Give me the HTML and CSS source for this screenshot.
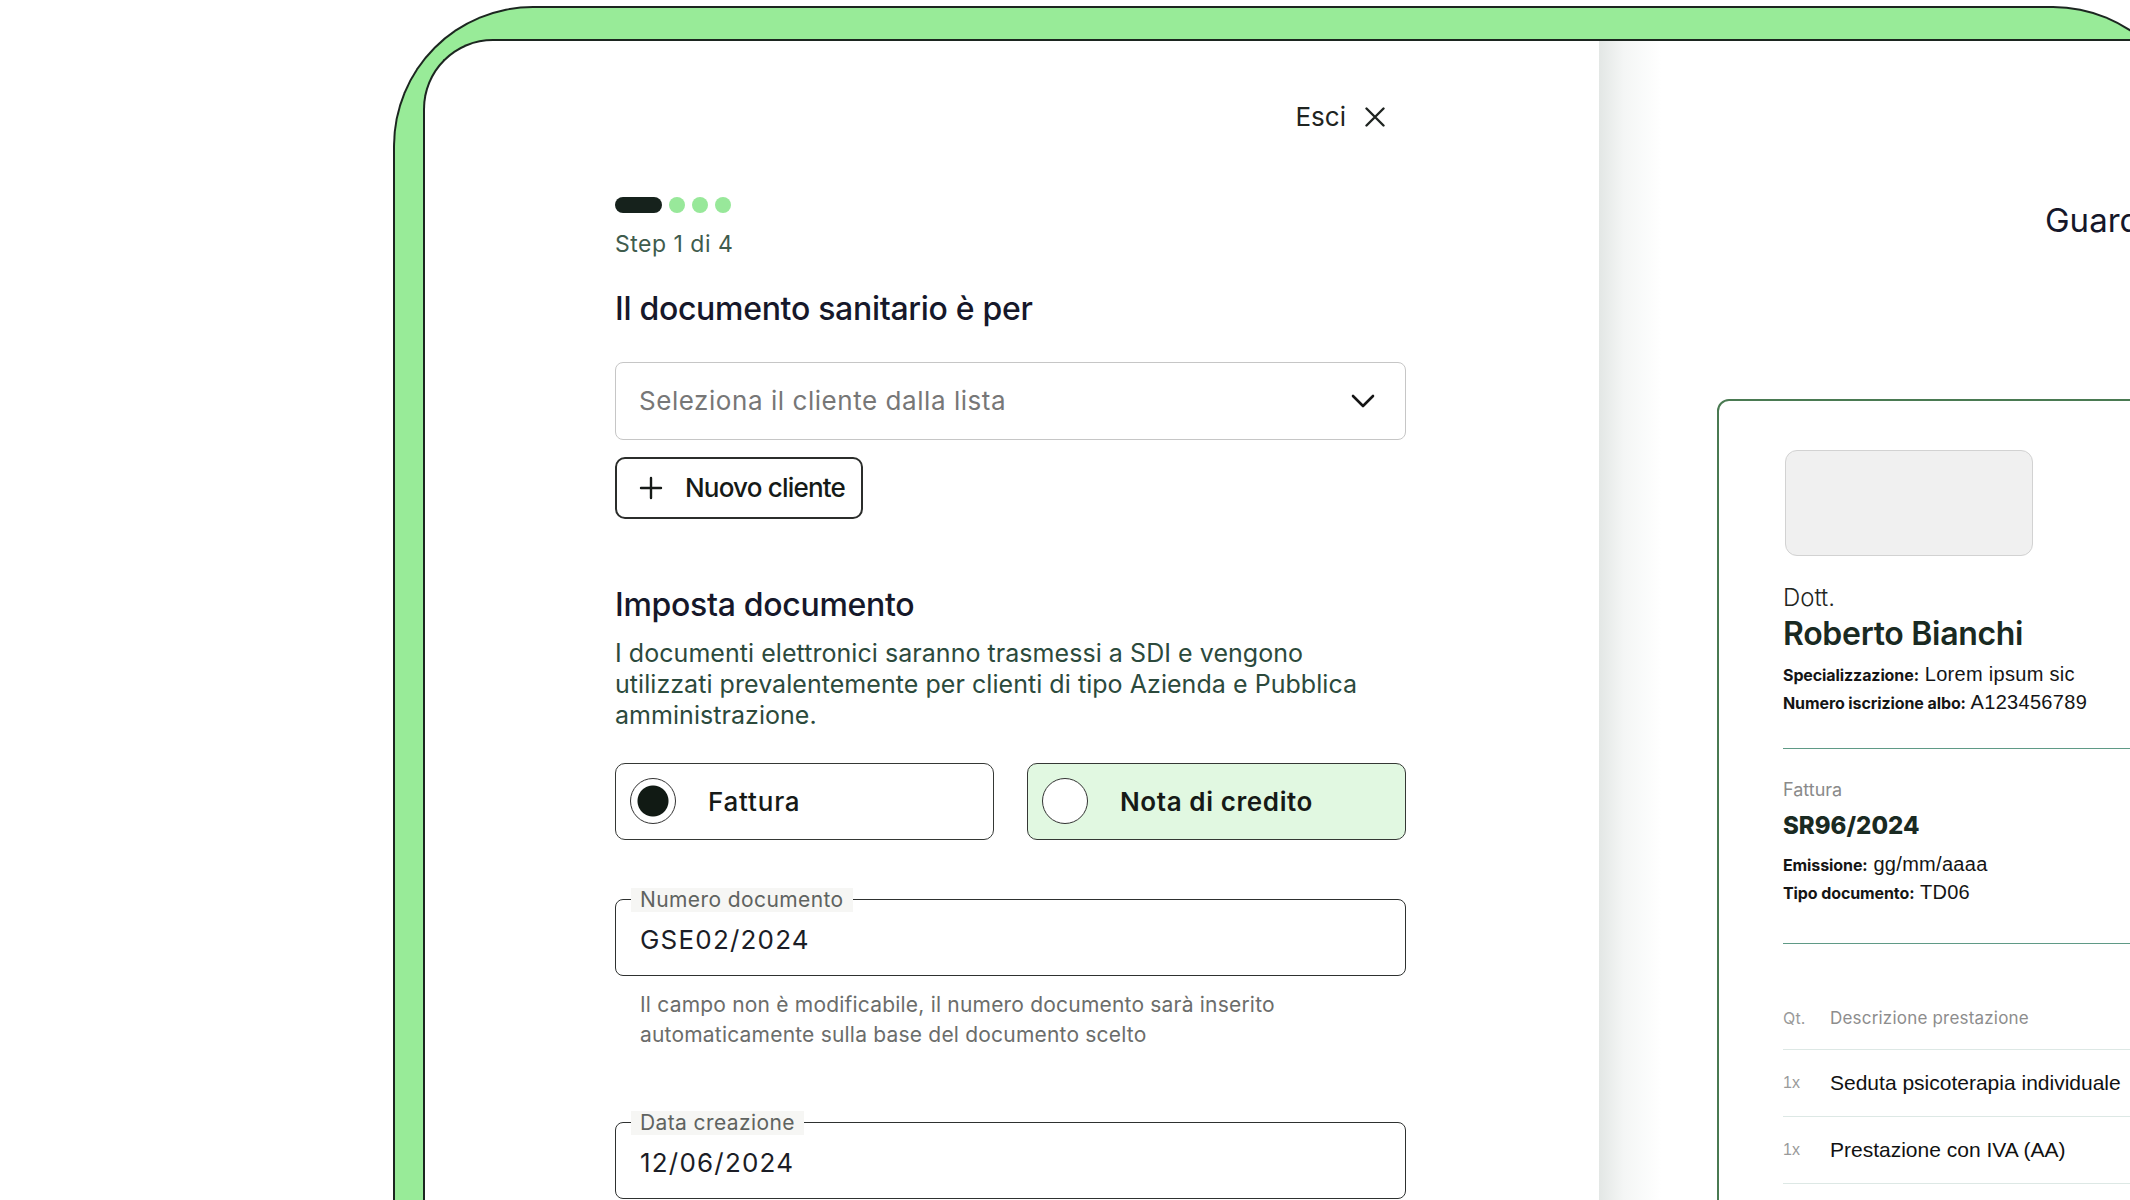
FILE: index.html
```html
<!DOCTYPE html>
<html lang="it">
<head>
    <meta charset="UTF-8">
    <meta name="viewport" content="width=device-width, initial-scale=1.0">
    <title>Nuovo documento sanitario</title>
    <link rel="stylesheet" href="styles.css">
</head>
<body>
    <div class="device">
        <div class="screen">
            <main class="form-pane">
                <div class="form">
                    <div class="topbar">
                        <button class="exit">Esci
                            <svg width="20" height="20" viewBox="0 0 20 20"><path d="M1.5 1.5 L18.5 18.5 M18.5 1.5 L1.5 18.5" stroke="#1f2421" stroke-width="2.4" stroke-linecap="round"/></svg>
                        </button>
                    </div>

                    <div class="steps">
                        <span class="step active"></span>
                        <span class="step"></span>
                        <span class="step"></span>
                        <span class="step"></span>
                    </div>
                    <p class="step-label">Step 1 di 4</p>

                    <h2 class="title">Il documento sanitario è per</h2>
                    <div class="select">
                        <span>Seleziona il cliente dalla lista</span>
                        <svg width="24" height="16" viewBox="0 0 24 16"><path d="M2 3 L12 13 L22 3" fill="none" stroke="#151515" stroke-width="2.6" stroke-linecap="round" stroke-linejoin="round"/></svg>
                    </div>
                    <button class="btn-outline">
                        <svg width="24" height="24" viewBox="0 0 24 24"><path d="M12 2 V22 M2 12 H22" stroke="#151a17" stroke-width="2.4" stroke-linecap="round"/></svg>
                        Nuovo cliente
                    </button>

                    <h2 class="title section">Imposta documento</h2>
                    <p class="lead">I documenti elettronici saranno trasmessi a SDI e vengono utilizzati prevalentemente per clienti di tipo Azienda e Pubblica amministrazione.</p>

                    <div class="choices">
                        <label class="choice"><span class="radio checked"></span>Fattura</label>
                        <label class="choice alt"><span class="radio"></span>Nota di credito</label>
                    </div>

                    <fieldset class="field">
                        <legend>Numero documento</legend>
                        <div class="field-value">GSE02/2024</div>
                    </fieldset>
                    <p class="hint">Il campo non è modificabile, il numero documento sarà inserito automaticamente sulla base del documento scelto</p>

                    <fieldset class="field date">
                        <legend>Data creazione</legend>
                        <div class="field-value">12/06/2024</div>
                    </fieldset>
                </div>
            </main>

            <aside class="preview-pane">
                <div class="preview-title">Guarda anteprima</div>
                <div class="doc">
                    <div class="logo-box"></div>
                    <div class="doc-prefix">Dott.</div>
                    <div class="doc-name">Roberto Bianchi</div>
                    <div class="meta-group">
                        <div class="meta"><b>Specializzazione:</b> Lorem ipsum sic</div>
                        <div class="meta"><b>Numero iscrizione albo:</b> A123456789</div>
                    </div>
                    <hr class="doc-rule">
                    <div class="doc-type">Fattura</div>
                    <div class="doc-number">SR96/2024</div>
                    <div class="meta-group">
                        <div class="meta"><b>Emissione:</b> gg/mm/aaaa</div>
                        <div class="meta"><b>Tipo documento:</b> TD06</div>
                    </div>
                    <hr class="doc-rule second">
                    <div class="rows">
                        <div class="row head"><span class="qty">Qt.</span><span>Descrizione prestazione</span></div>
                        <div class="row"><span class="qty">1x</span><span>Seduta psicoterapia individuale</span></div>
                        <div class="row"><span class="qty">1x</span><span>Prestazione con IVA (AA)</span></div>
                    </div>
                </div>
            </aside>
        </div>
    </div>
</body>
</html>
```

FILE: styles.css
```css
html, body {
    margin: 0;
    height: 100%;
}
body {
    background: #fff;
    font-family: Inter, "Noto Sans", sans-serif;
    color: #17191f;
    overflow: hidden;
}
.device {
    box-sizing: border-box;
    width: 1800px;
    height: 1300px;
    margin: 6px 0 0 393px;
    padding: 31px 0 0 28px;
    background: #98eb98;
    border: 2px solid #1c2620;
    border-bottom: none;
    border-radius: 140px 140px 0 0;
}
.screen {
    display: flex;
    height: 100%;
    background: #fff;
    border: 2px solid #1c2620;
    border-bottom: none;
    border-right: none;
    border-radius: 70px 0 0 0;
    overflow: hidden;
}

/* form */
.form-pane {
    width: 1174px;
    flex: none;
}
.form {
    width: 791px;
    padding: 60px 0 0 190px;
}
.topbar {
    display: flex;
    justify-content: flex-end;
    padding-right: 21px;
}
.exit {
    display: flex;
    align-items: center;
    gap: 19px;
    border: none;
    background: none;
    padding: 0;
    font-family: inherit;
    font-size: 26px;
    line-height: 32px;
    color: #1f2421;
}
.steps {
    display: flex;
    gap: 7px;
    margin-top: 64px;
}
.step {
    width: 16px;
    height: 16px;
    border-radius: 8px;
    background: #98e89a;
}
.step.active {
    width: 47px;
    background: #16221c;
}
.step-label {
    margin: 17px 0 0;
    font-size: 23px;
    line-height: 28px;
    color: #3f5c4d;
    letter-spacing: 0.5px;
}
.title {
    margin: 31px 0 0;
    font-size: 32px;
    line-height: 40px;
    font-weight: 500;
    letter-spacing: -0.3px;
    color: #16182a;
}
.title.section {
    margin-top: 66px;
}
.select {
    box-sizing: border-box;
    display: flex;
    align-items: center;
    justify-content: space-between;
    height: 78px;
    margin-top: 32.5px;
    padding: 0 30px 0 23px;
    border: 1.5px solid #c6c6c6;
    border-radius: 8px;
    font-size: 26px;
    color: #777;
    letter-spacing: 0.55px;
}
.btn-outline {
    box-sizing: border-box;
    display: flex;
    align-items: center;
    gap: 22px;
    height: 62px;
    margin-top: 17px;
    padding: 0 16px 0 22px;
    border: 2px solid #2b2d2b;
    border-radius: 10px;
    background: #fff;
    font-family: inherit;
    font-size: 26px;
    font-weight: 500;
    letter-spacing: -0.8px;
    color: #151a17;
}
.lead {
    margin: 13px 0 0;
    font-size: 25px;
    line-height: 31px;
    color: #2c4a3c;
    letter-spacing: 0.05px;
}
.choices {
    display: grid;
    grid-template-columns: 1fr 1fr;
    gap: 33px;
    margin-top: 32px;
}
.choice {
    box-sizing: border-box;
    display: flex;
    align-items: center;
    gap: 32px;
    height: 77px;
    padding-left: 14px;
    border: 1.5px solid #353835;
    border-radius: 10px;
    font-size: 26px;
    font-weight: 500;
    letter-spacing: 0.8px;
    color: #161a17;
}
.choice.alt {
    background: #e1f8e1;
    font-weight: 600;
    letter-spacing: 0.6px;
}
.radio {
    box-sizing: border-box;
    width: 46px;
    height: 46px;
    border: 1.5px solid #333;
    border-radius: 50%;
    background: #fff;
}
.radio.checked {
    background: radial-gradient(circle, #111a14 0 15px, #fff 16px);
}
.field {
    margin: 48px 0 0;
    padding: 12px 15px 19px;
    border: 1.5px solid #2e3130;
    border-radius: 8px;
    min-width: 0;
}
.field legend {
    padding: 0 9px;
    background: #f6f6f4;
    font-size: 21px;
    line-height: 24px;
    letter-spacing: 0.4px;
    color: #5f6360;
}
.field-value {
    padding-left: 9px;
    font-size: 26px;
    line-height: 32px;
    letter-spacing: 1.2px;
    color: #1b1d26;
}
.field.date {
    margin-top: 61px;
}
.hint {
    margin: 14px 0 0;
    padding-left: 25px;
    font-size: 21px;
    line-height: 30px;
    color: #6b6d6b;
    letter-spacing: 0.2px;
}

/* preview */
.preview-pane {
    flex: 1;
    background: linear-gradient(90deg, #e3e7e5 0, #f4f6f5 25px, #fff 62px);
}
.preview-title {
    margin: 159px 0 0 446px;
    font-size: 33px;
    line-height: 40px;
    color: #15172a;
    white-space: nowrap;
}
.doc {
    box-sizing: border-box;
    width: 700px;
    height: 900px;
    margin: 159px 0 0 118px;
    padding: 49px 0 0 64px;
    border: 2px solid #4a7a52;
    border-radius: 12px;
    background: #fff;
}
.logo-box {
    box-sizing: border-box;
    width: 248px;
    height: 106px;
    margin-left: 2px;
    border: 1px solid #d2d2d2;
    border-radius: 12px;
    background: #f0f0f0;
}
.doc-prefix {
    margin-top: 29px;
    font-size: 24px;
    font-weight: 300;
    line-height: 26px;
    color: #1f2622;
}
.doc-name {
    margin-top: 4px;
    font-size: 32px;
    font-weight: 600;
    line-height: 38px;
    letter-spacing: -0.3px;
    color: #1a2a22;
}
.meta-group {
    margin-top: 8px;
}
.meta {
    font-family: "Liberation Sans", Arial, sans-serif;
    font-size: 20px;
    line-height: 27px;
    letter-spacing: 0.3px;
    color: #151515;
}
.meta b {
    font-family: Inter, sans-serif;
    font-size: 16px;
    font-weight: 700;
    letter-spacing: -0.1px;
}
.doc-rule {
    margin: 31px 0 0;
    border: none;
    border-top: 1.5px solid #5f9a86;
}
.doc-rule.second {
    margin-top: 36px;
}
.doc-type {
    margin-top: 29px;
    font-size: 18px;
    line-height: 24px;
    color: #8a8a8a;
}
.doc-number {
    margin-top: 9px;
    font-size: 24px;
    font-weight: 800;
    line-height: 30px;
    color: #1a2a22;
}
.doc-number + .meta-group {
    margin-top: 10px;
}
.rows {
    margin-top: 43px;
}
.row {
    box-sizing: border-box;
    display: flex;
    align-items: center;
    height: 67px;
    border-bottom: 1.5px solid #dde8e5;
    font-family: "Liberation Sans", Arial, sans-serif;
    font-size: 21px;
    color: #111;
}
.row.head {
    height: 63px;
    font-family: Inter, sans-serif;
    font-size: 17px;
    letter-spacing: 0.2px;
    color: #8d8d8d;
}
.qty {
    width: 47px;
    color: #9a9a9a;
    font-size: 16px;
}
```
